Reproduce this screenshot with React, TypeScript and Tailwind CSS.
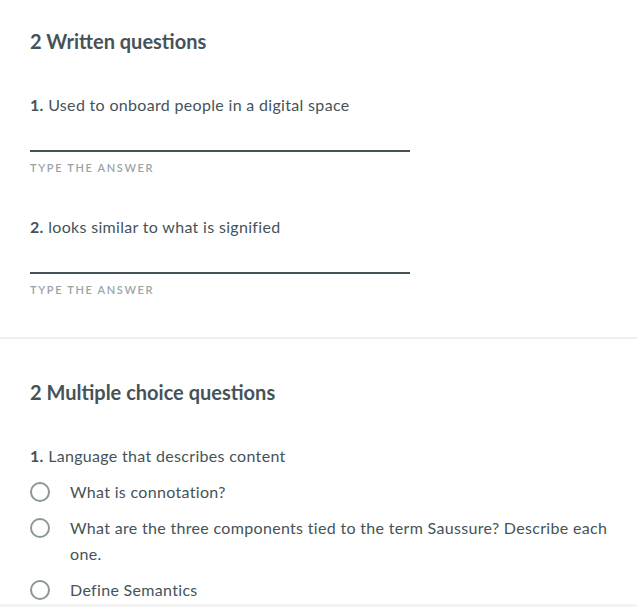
const font = { fontFamily: 'Lato, "Noto Sans", sans-serif' }

function WrittenQuestion({ num, text, first }: { num: number; text: string; first?: boolean }) {
  return (
    <div className={first ? 'mt-[38px]' : 'mt-[39px]'}>
      <p className="text-[16px] leading-6 tracking-[0.02em] text-[#455358] [font-variant-ligatures:none]">
        <span className="font-bold">{num}.</span> {text}
      </p>
      <div className="w-[380px] h-[35px] border-b-2 border-[#455358]" />
      <p className="mt-2 text-[11px] leading-4 font-semibold tracking-[0.15em] uppercase text-[#9aa3a6]">
        Type the answer
      </p>
    </div>
  )
}

function Option({ text }: { text: string }) {
  return (
    <label className="flex items-start">
      <span className="mt-[3px] w-5 h-5 shrink-0 rounded-full border-2 border-[#8c979b] bg-white" />
      <span className="ml-5 text-[16px] leading-[26px] tracking-[0.02em] text-[#455358] [font-variant-ligatures:none]">
        {text}
      </span>
    </label>
  )
}

export default function App() {
  return (
    <div className="w-[637px] min-h-[607px] bg-white" style={font}>
      {/* Written */}
      <section className="px-[30px] pt-[27px] pb-[39px] border-b-2 border-[#efefef]">
        <h2 className="text-[20px] leading-7 font-bold text-[#455358]">2 Written questions</h2>
        <WrittenQuestion first num={1} text="Used to onboard people in a digital space" />
        <WrittenQuestion num={2} text="looks similar to what is signified" />
      </section>

      {/* Multiple choice */}
      <section className="pl-[30px] pr-[16px] pt-[39px]">
        <h2 className="text-[20px] leading-7 font-bold text-[#455358]">2 Multiple choice questions</h2>
        <p className="mt-[38px] text-[16px] leading-6 tracking-[0.02em] text-[#455358]">
          <span className="font-bold">1.</span> Language that describes content
        </p>
        <div className="mt-[11px] flex flex-col gap-[10px]">
          <Option text="What is connotation?" />
          <Option text="What are the three components tied to the term Saussure? Describe each one." />
          <Option text="Define Semantics" />
        </div>
      </section>
      <div className="mt-px h-2 bg-[#f4f4f4]" />
    </div>
  )
}
